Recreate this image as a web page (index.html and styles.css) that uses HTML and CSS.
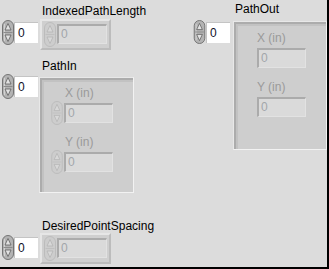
FILE: index.html
```html
<!DOCTYPE html>
<html>
  <head>
    <title>Front Panel</title>
    <link rel="stylesheet" href="styles.css">
  </head>
  <body>
    <div class="panel">
      <div class="col-left">
        <div class="lbl lbl-first">IndexedPathLength</div>
        <div class="row">
          <div class="num">
            <svg class="spin" width="12" height="25" viewBox="0 0 12 25">
              <rect class="body" x="0.5" y="0.5" width="11" height="24" rx="5.5"/>
              <path class="hl" d="M2.5 4 V21"/>
              <path class="mid" d="M1.5 12.5 H10.5"/>
              <path class="arr" d="M6 3.5 L9 10 H3 Z"/>
              <path class="arr" d="M6 21.5 L9 15 H3 Z"/>
            </svg>
            <div class="inp">0</div>
          </div>
          <div class="ind">
            <svg class="spin off" width="12" height="25" viewBox="0 0 12 25">
              <rect class="body" x="0.5" y="0.5" width="11" height="24" rx="5.5"/>
              <path class="mid" d="M1.5 12.5 H10.5"/>
              <path class="arr" d="M6 3.5 L9 10 H3 Z"/>
              <path class="arr" d="M6 21.5 L9 15 H3 Z"/>
            </svg>
            <div class="fld">0</div>
          </div>
        </div>

        <div class="lbl lbl-pathin">PathIn</div>
        <div class="row">
          <div class="num">
            <svg class="spin" width="12" height="25" viewBox="0 0 12 25">
              <rect class="body" x="0.5" y="0.5" width="11" height="24" rx="5.5"/>
              <path class="hl" d="M2.5 4 V21"/>
              <path class="mid" d="M1.5 12.5 H10.5"/>
              <path class="arr" d="M6 3.5 L9 10 H3 Z"/>
              <path class="arr" d="M6 21.5 L9 15 H3 Z"/>
            </svg>
            <div class="inp">0</div>
          </div>
          <div class="cluster cluster-in">
            <div class="clbl">X (in)</div>
            <div class="crow">
              <svg class="spin off" width="12" height="24" viewBox="0 0 12 25">
                <rect class="body" x="0.5" y="0.5" width="11" height="24" rx="5.5"/>
                <path class="mid" d="M1.5 12.5 H10.5"/>
                <path class="arr" d="M6 3.5 L9 10 H3 Z"/>
                <path class="arr" d="M6 21.5 L9 15 H3 Z"/>
              </svg>
              <div class="fld">0</div>
            </div>
            <div class="clbl clbl-next">Y (in)</div>
            <div class="crow">
              <svg class="spin off" width="12" height="24" viewBox="0 0 12 25">
                <rect class="body" x="0.5" y="0.5" width="11" height="24" rx="5.5"/>
                <path class="mid" d="M1.5 12.5 H10.5"/>
                <path class="arr" d="M6 3.5 L9 10 H3 Z"/>
                <path class="arr" d="M6 21.5 L9 15 H3 Z"/>
              </svg>
              <div class="fld">0</div>
            </div>
          </div>
        </div>

        <div class="lbl lbl-spacing">DesiredPointSpacing</div>
        <div class="row">
          <div class="num num-low">
            <svg class="spin" width="12" height="25" viewBox="0 0 12 25">
              <rect class="body" x="0.5" y="0.5" width="11" height="24" rx="5.5"/>
              <path class="hl" d="M2.5 4 V21"/>
              <path class="mid" d="M1.5 12.5 H10.5"/>
              <path class="arr" d="M6 3.5 L9 10 H3 Z"/>
              <path class="arr" d="M6 21.5 L9 15 H3 Z"/>
            </svg>
            <div class="inp">0</div>
          </div>
          <div class="ind">
            <svg class="spin off" width="12" height="25" viewBox="0 0 12 25">
              <rect class="body" x="0.5" y="0.5" width="11" height="24" rx="5.5"/>
              <path class="mid" d="M1.5 12.5 H10.5"/>
              <path class="arr" d="M6 3.5 L9 10 H3 Z"/>
              <path class="arr" d="M6 21.5 L9 15 H3 Z"/>
            </svg>
            <div class="fld">0</div>
          </div>
        </div>
      </div>

      <div class="col-right">
        <div class="lbl lbl-pathout">PathOut</div>
        <div class="row row-out">
          <div class="num num-out">
            <svg class="spin" width="13" height="24" viewBox="0 0 12 25">
              <rect class="body" x="0.5" y="0.5" width="11" height="24" rx="5.5"/>
              <path class="hl" d="M2.5 4 V21"/>
              <path class="mid" d="M1.5 12.5 H10.5"/>
              <path class="arr" d="M6 3.5 L9 10 H3 Z"/>
              <path class="arr" d="M6 21.5 L9 15 H3 Z"/>
            </svg>
            <div class="inp">0</div>
          </div>
          <div class="cluster cluster-out">
            <div class="clbl">X (in)</div>
            <div class="crow">
              <div class="fld">0</div>
            </div>
            <div class="clbl clbl-next">Y (in)</div>
            <div class="crow">
              <div class="fld">0</div>
            </div>
          </div>
        </div>
      </div>
    </div>
  </body>
</html>
```

FILE: styles.css
```css
body {
  margin: 0;
  font-family: "Liberation Sans", Arial, sans-serif;
  font-size: 12px;
}
.panel {
  display: flex;
  width: 327px;
  height: 267px;
  background-color: #dcdcdc;
  border-right: 2px solid #000;
  border-bottom: 2px solid #000;
  overflow: hidden;
}
.col-left {
  width: 136px;
  display: flex;
  flex-direction: column;
}
.col-right {
  flex: 1;
  display: flex;
  flex-direction: column;
  padding-left: 57px;
}
.lbl {
  height: 14px;
  line-height: 14px;
  color: #000;
  margin-left: 42px;
  white-space: nowrap;
}
.lbl-first {
  margin-top: 4px;
  margin-bottom: 1px;
}
.lbl-pathin {
  margin-top: 9px;
}
.lbl-spacing {
  margin-top: 26px;
}
.lbl-pathout {
  margin-top: 2px;
  margin-bottom: 5px;
}
.row {
  display: flex;
  align-items: flex-start;
}
.num {
  display: flex;
  align-items: center;
  margin-left: 2px;
  margin-top: 1px;
}
.num-low {
  margin-top: 2px;
}
.num-out {
  margin-left: 0;
  margin-top: -1px;
}
.inp {
  width: 24px;
  height: 21px;
  box-sizing: border-box;
  background-color: #fff;
  border-top: 1px solid #c4c4c4;
  border-left: 1px solid #c4c4c4;
  padding-left: 3px;
  line-height: 20px;
  font-size: 12px;
  color: #101028;
}

/* spinner buttons */
.spin .body {
  fill: #b3b3b3;
  stroke: #747474;
}
.spin .hl {
  stroke: #d2d2d2;
  stroke-width: 1;
}
.spin .mid {
  stroke: #8c8c8c;
}
.spin .arr {
  fill: #e2e2e2;
  stroke: #5e5e5e;
  stroke-width: 0.8;
}
.spin.off .body {
  fill: #cdcdcd;
  stroke: #bcbcbc;
}
.spin.off .mid {
  stroke: #c0c0c0;
}
.spin.off .arr {
  fill: #d8d8d8;
  stroke: #b4b4b4;
}

/* disabled numeric indicator */
.ind {
  display: flex;
  align-items: flex-start;
  gap: 1px;
  width: 71px;
  height: 31px;
  box-sizing: border-box;
  margin-left: 2px;
  padding: 1px 0 0 2px;
  background-color: #cfcfcf;
  border: 2px solid;
  border-color: #e6e6e6 #bcbcbc #bcbcbc #e6e6e6;
}
.ind .fld {
  margin-top: 2px;
  width: 50px;
}
.fld {
  width: 49px;
  height: 20px;
  box-sizing: border-box;
  background-color: #dadada;
  border-top: 2px solid #ababab;
  border-left: 2px solid #ababab;
  border-bottom: 1px solid #e2e2e2;
  border-right: 1px solid #e2e2e2;
  padding-left: 2px;
  line-height: 17px;
  color: #a2a6aa;
}

/* clusters */
.cluster {
  box-sizing: border-box;
  background-color: #cecece;
  border: 1px solid #f2f2f2;
  border-top-color: #e8e8e8;
  border-left-color: #e8e8e8;
  box-shadow: inset 2px 2px 0 #acacac, inset 4px 4px 0 #c2c2c2;
}
.cluster-in {
  width: 95px;
  height: 116px;
  margin-left: 1px;
  margin-top: 4px;
  padding: 8px 0 0 11px;
}
.cluster-out {
  flex: 1;
  height: 129px;
  margin-left: 3px;
  padding: 9px 0 0 23px;
}
.clbl {
  height: 14px;
  line-height: 14px;
  color: #9a9a9a;
  margin-bottom: 3px;
}
.cluster-in .clbl {
  margin-left: 14px;
}
.clbl-next {
  margin-top: 12px;
}
.crow {
  display: flex;
  align-items: center;
  gap: 1px;
  height: 20px;
}
.crow .spin {
  margin: -2px 0;
}
```
